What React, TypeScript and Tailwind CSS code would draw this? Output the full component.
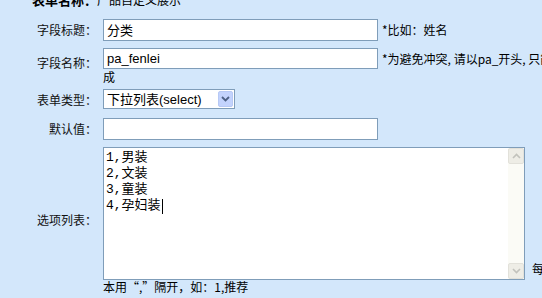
import React from "react";

const F = { fontFamily: '"Noto Sans CJK SC", "Noto Sans", sans-serif' };

function Label({ children, pt }: { children: React.ReactNode; pt: string }) {
  return (
    <div className={`w-[97px] shrink-0 text-right text-[12px] leading-[12px] text-[#111] ${pt}`}>{children}</div>
  );
}

export default function App() {
  return (
    <div className="relative w-[542px] h-[298px] overflow-hidden bg-[#d3e7fb] text-black" style={F}>
      {/* row 0 */}
      <div className="flex mt-[-7px] h-[14px] items-center">
        <div className="w-[97px] shrink-0 text-right text-[13px] leading-[14px] font-bold">表单名称：</div>
        <div className="text-[12px] leading-[14px] pl-[0px]">产品自定义展示</div>
      </div>

      {/* row 1 */}
      <div className="flex mt-[12px] items-start">
        <Label pt="pt-[5px]">字段标题：</Label>
        <div className="ml-[6px] flex items-center whitespace-nowrap">
          <div className="w-[275px] h-[22px] border border-[#7f9db9] bg-white pl-[3px] text-[13px] leading-[20px]">分类</div>
          <span className="ml-[4px] text-[12px] leading-[12px]">*比如：姓名</span>
        </div>
      </div>

      {/* row 2 */}
      <div className="flex mt-[7px] items-start">
        <Label pt="pt-[9px]">字段名称：</Label>
        <div className="ml-[6px] flex flex-col">
          <div className="flex items-center whitespace-nowrap">
            <div className="w-[275px] h-[21px] border border-[#7f9db9] bg-white pl-[3px] text-[13px] leading-[19px]" style={{ fontFamily: '"Liberation Sans", Arial, sans-serif' }}>pa_fenlei</div>
            <span className="ml-[4px] text-[12px] leading-[12px]">*为避免冲突, 请以pa_开头, 只能使用字母、数字和下划线组</span>
          </div>
          <div className="text-[12px] leading-[12px] mt-[2px]">成</div>
        </div>
      </div>

      {/* row 3 */}
      <div className="flex mt-[6px] items-start">
        <Label pt="pt-[5px]">表单类型：</Label>
        <div className="ml-[6px] w-[132px] h-[20px] border border-[#7f9db9] bg-white flex items-center justify-between pl-[3px] pr-[1px]">
          <span className="text-[13px] leading-[18px]">下拉列表<span style={{ fontFamily: '"Liberation Sans", Arial, sans-serif' }}>(select)</span></span>
          <div className="w-[15px] h-[16px] rounded-[2px] bg-[#c3d3fd] border border-[#b7c9f5] flex items-center justify-center">
            <svg width="9" height="6" viewBox="0 0 9 6"><path d="M1 1 L4.5 4.5 L8 1" fill="none" stroke="#4d6185" strokeWidth="1.8" /></svg>
          </div>
        </div>
      </div>

      {/* row 4 */}
      <div className="flex mt-[9px] items-start">
        <Label pt="pt-[5px]">默认值：</Label>
        <div className="ml-[6px] w-[275px] h-[22px] border border-[#7f9db9] bg-white" />
      </div>

      {/* row 5 */}
      <div className="flex mt-[7px] items-start">
        <Label pt="pt-[67px]">选项列表：</Label>
        <div className="ml-[6px] flex flex-col">
          <div className="flex items-end whitespace-nowrap">
            <div className="w-[422px] h-[133px] border border-[#7f9db9] bg-white flex">
              <div className="flex-1 pl-[2px] pt-[2px] text-[13px] leading-[16px]" style={{ fontFamily: '"Liberation Mono", "Noto Sans CJK SC", monospace' }}>
                <div>1,男装</div>
                <div>2,文装</div>
                <div>3,童装</div>
                <div className="flex items-center">4,孕妇装<span className="inline-block w-[1px] h-[15px] bg-black ml-[1px]" /></div>
              </div>
              <div className="w-[16px] bg-[#fbfbf6] flex flex-col justify-between">
                <div className="h-[16px] bg-[#eeede6] border border-[#e2e1da] rounded-[2px] flex items-center justify-center">
                  <svg width="9" height="6" viewBox="0 0 9 6"><path d="M1 5 L4.5 1.5 L8 5" fill="none" stroke="#c2c2bc" strokeWidth="1.6" /></svg>
                </div>
                <div className="h-[16px] bg-[#eeede6] border border-[#e2e1da] rounded-[2px] flex items-center justify-center">
                  <svg width="9" height="6" viewBox="0 0 9 6"><path d="M1 1 L4.5 4.5 L8 1" fill="none" stroke="#c2c2bc" strokeWidth="1.6" /></svg>
                </div>
              </div>
            </div>
            <span className="ml-[7px] mb-[5px] text-[12px] leading-[12px]">每行一个选项，选项值与选项名称之间用“,”隔开</span>
          </div>
          <div className="text-[12px] leading-[12px] mt-[1px] whitespace-nowrap">本用“,”隔开，如：1,推荐</div>
        </div>
      </div>
    </div>
  );
}
